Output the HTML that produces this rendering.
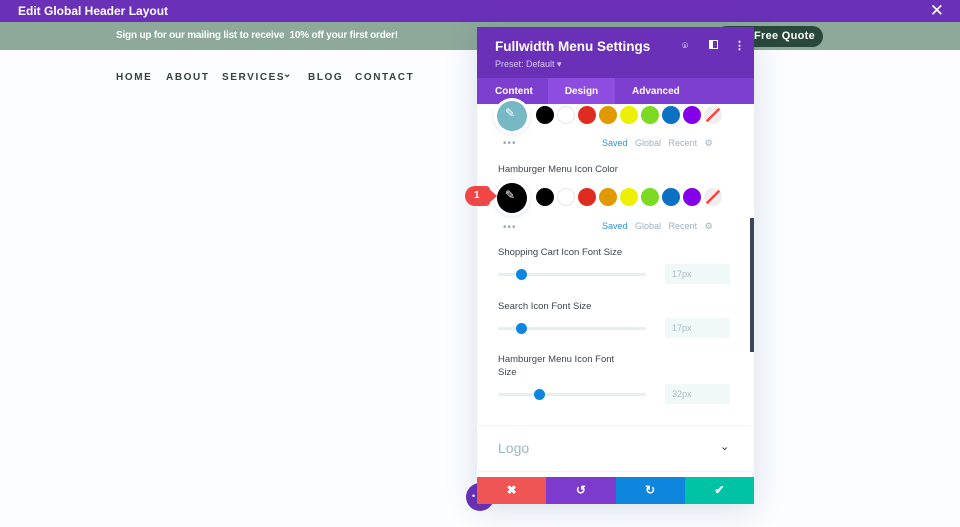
<!DOCTYPE html>
<html><head><meta charset="utf-8"><style>
*{box-sizing:border-box;margin:0;padding:0}
body{width:960px;height:527px;overflow:hidden;background:#fbfdfe;font-family:"Liberation Sans",sans-serif;position:relative}
.top{position:absolute;left:0;top:0;width:960px;height:22px;background:#6a31b8;color:#fff;font-size:12px;font-weight:bold;padding:4px 0 0 18px}
.top .x{position:absolute;right:16px;top:1px;font-size:17px;font-weight:normal}
.bar{position:absolute;left:0;top:22px;width:960px;height:28px;background:#8ea89a;color:#fff;font-size:10px;font-weight:bold}
.bar span{position:absolute;left:116px;top:8px;letter-spacing:-.2px}
.quote{position:absolute;left:716px;top:4px;width:107px;height:21px;border-radius:11px;background:#29473a;color:#fff;font-size:11px;padding:4px 0 0 38px;letter-spacing:.3px}
.nav{position:absolute;top:72px;font-size:10px;font-weight:bold;color:#33423a;letter-spacing:1.6px}
.panel{position:absolute;left:477px;top:27px;width:277px;height:477px;background:#fff;box-shadow:0 5px 30px rgba(30,60,120,.15)}
.ph{height:51px;background:#6a31b8;color:#fff;padding:12px 0 0 18px}
.ph h1{font-size:13.5px;font-weight:bold}
.ph p{font-size:9px;color:#d8c8f0;margin-top:5px}
.tabs{height:26px;background:#7d3fcf;position:relative;color:#fff;font-size:10px;font-weight:bold}
.tabs div{position:absolute;top:8px}
.tabs .act{left:71px;width:67px;height:26px;top:0;background:#8e4ce0;padding-top:8px;text-align:center}
.sw{position:absolute;width:18px;height:18px;border-radius:50%}
.lab{position:absolute;left:21px;font-size:9.5px;color:#3e4650}
.links{position:absolute;font-size:9px;color:#a0b0c0}
.links b{color:#2b95d9;font-weight:normal}
.track{position:absolute;left:21px;width:148px;height:3px;background:#e6f0f2;border-radius:2px}
.knob{position:absolute;width:11px;height:11px;border-radius:50%;background:#0f86de;top:-4px}
.inp{position:absolute;left:188px;width:65px;height:20px;background:#f0f8f8;color:#a8bcc4;font-size:9px;padding:5px 0 0 7px}
.big{position:absolute;width:30px;height:30px;border-radius:50%;box-shadow:0 0 0 3px #fff,0 1px 8px rgba(0,80,140,.3)}
.foot{position:absolute;left:0;top:450px;width:277px;height:27px;display:flex}
.foot div{flex:1;color:#fff;font-size:12px;font-weight:bold;text-align:center;padding-top:6px}
</style></head><body>
<div class="top">Edit Global Header Layout<span class="x">✕</span></div>
<div class="bar"><span>Sign up for our mailing list to receive &nbsp;10% off your first order!</span><div class="quote">Free Quote</div></div>
<div class="nav" style="left:116px">HOME</div>
<div class="nav" style="left:166px">ABOUT</div>
<div class="nav" style="left:222px">SERVICES</div>
<div class="nav" style="left:283px;top:69px;letter-spacing:0">⌄</div>
<div class="nav" style="left:308px">BLOG</div>
<div class="nav" style="left:355px">CONTACT</div>

<div class="panel">
<div class="ph"><h1>Fullwidth Menu Settings</h1><p>Preset: Default ▾</p>
<div style="position:absolute;left:205px;top:14px;font-size:10px">⌾</div>
<div style="position:absolute;left:232px;top:13px;width:9px;height:9px;border:1.5px solid #fff;border-left-width:4px"></div>
<div style="position:absolute;left:257px;top:12px;font-size:11px;font-weight:bold">⋮</div>
</div>
<div class="tabs"><div style="left:18px">Content</div><div class="act">Design</div><div style="left:155px">Advanced</div></div>

<div class="big" style="left:20px;top:74px;background:#76b8c4"></div>
<div style="position:absolute;left:28px;top:79px;color:#fff;font-size:12px">✎</div>
<div style="position:absolute;left:26px;top:111px;color:#9aa;font-size:10px;letter-spacing:1px">•••</div>
<div class="links" style="left:125px;top:111px"><b>Saved</b> &nbsp;&nbsp;Global &nbsp;&nbsp;Recent &nbsp;&nbsp;⚙</div>

<div class="lab" style="top:137px">Hamburger Menu Icon Color</div>
<div class="big" style="left:20px;top:156px;background:#000"></div>
<div style="position:absolute;left:28px;top:161px;color:#fff;font-size:12px">✎</div>
<div style="position:absolute;left:26px;top:195px;color:#9aa;font-size:10px;letter-spacing:1px">•••</div>
<div class="links" style="left:125px;top:194px"><b>Saved</b> &nbsp;&nbsp;Global &nbsp;&nbsp;Recent &nbsp;&nbsp;⚙</div>

<div class="lab" style="top:220px">Shopping Cart Icon Font Size</div>
<div class="track" style="top:246px"><div class="knob" style="left:18px"></div></div>
<div class="inp" style="top:237px">17px</div>
<div class="lab" style="top:274px">Search Icon Font Size</div>
<div class="track" style="top:300px"><div class="knob" style="left:18px"></div></div>
<div class="inp" style="top:291px">17px</div>
<div class="lab" style="top:326px;line-height:13px">Hamburger Menu Icon Font<br>Size</div>
<div class="track" style="top:366px"><div class="knob" style="left:36px"></div></div>
<div class="inp" style="top:357px">32px</div>

<div style="position:absolute;left:0;top:398px;width:274px;height:1px;background:#eef3f5"></div>
<div style="position:absolute;left:21px;top:413px;font-size:14px;color:#9cb8c4">Logo</div>
<div style="position:absolute;left:243px;top:413px;font-size:11px;color:#333">⌄</div>
<div style="position:absolute;left:0;top:444px;width:274px;height:1px;background:#eef3f5"></div>
<div style="position:absolute;left:273px;top:191px;width:4px;height:134px;background:#3c4858"></div>

<div class="foot"><div style="background:#ef5555">✖</div><div style="background:#7c3bcd">↺</div><div style="background:#0f86de">↻</div><div style="background:#00c2a4">✔</div></div>
</div>

<div class="sw" style="left:536px;top:106px;background:#000"></div>
<div class="sw" style="left:557px;top:106px;background:#fff;border:1px solid #e6e6e6"></div>
<div class="sw" style="left:578px;top:106px;background:#e02b20"></div>
<div class="sw" style="left:599px;top:106px;background:#e09900"></div>
<div class="sw" style="left:620px;top:106px;background:#edf000"></div>
<div class="sw" style="left:641px;top:106px;background:#7cda24"></div>
<div class="sw" style="left:662px;top:106px;background:#0c71c3"></div>
<div class="sw" style="left:683px;top:106px;background:#8300e9"></div>
<div class="sw" style="left:704px;top:106px;background:linear-gradient(135deg,#eee 45%,#f44 45%,#f44 55%,#eee 55%)"></div>
<div class="sw" style="left:536px;top:188px;background:#000"></div>
<div class="sw" style="left:557px;top:188px;background:#fff;border:1px solid #e6e6e6"></div>
<div class="sw" style="left:578px;top:188px;background:#e02b20"></div>
<div class="sw" style="left:599px;top:188px;background:#e09900"></div>
<div class="sw" style="left:620px;top:188px;background:#edf000"></div>
<div class="sw" style="left:641px;top:188px;background:#7cda24"></div>
<div class="sw" style="left:662px;top:188px;background:#0c71c3"></div>
<div class="sw" style="left:683px;top:188px;background:#8300e9"></div>
<div class="sw" style="left:704px;top:188px;background:linear-gradient(135deg,#eee 45%,#f44 45%,#f44 55%,#eee 55%)"></div>

<div style="position:absolute;left:465px;top:186px;width:25px;height:20px;background:#ef4646;border-radius:10px 4px 4px 10px;color:#fff;font-size:10px;font-weight:bold;padding:4px 0 0 9px">1</div>
<div style="position:absolute;left:488px;top:188px;width:0;height:0;border-top:8px solid transparent;border-bottom:8px solid transparent;border-left:9px solid #ef4646"></div>

<div style="position:absolute;left:466px;top:483px;width:28px;height:28px;border-radius:50%;background:#6a31b8;z-index:-1"></div>
<div style="position:absolute;left:472px;top:491px;color:#fff;font-size:9px">•</div>
</body></html>
